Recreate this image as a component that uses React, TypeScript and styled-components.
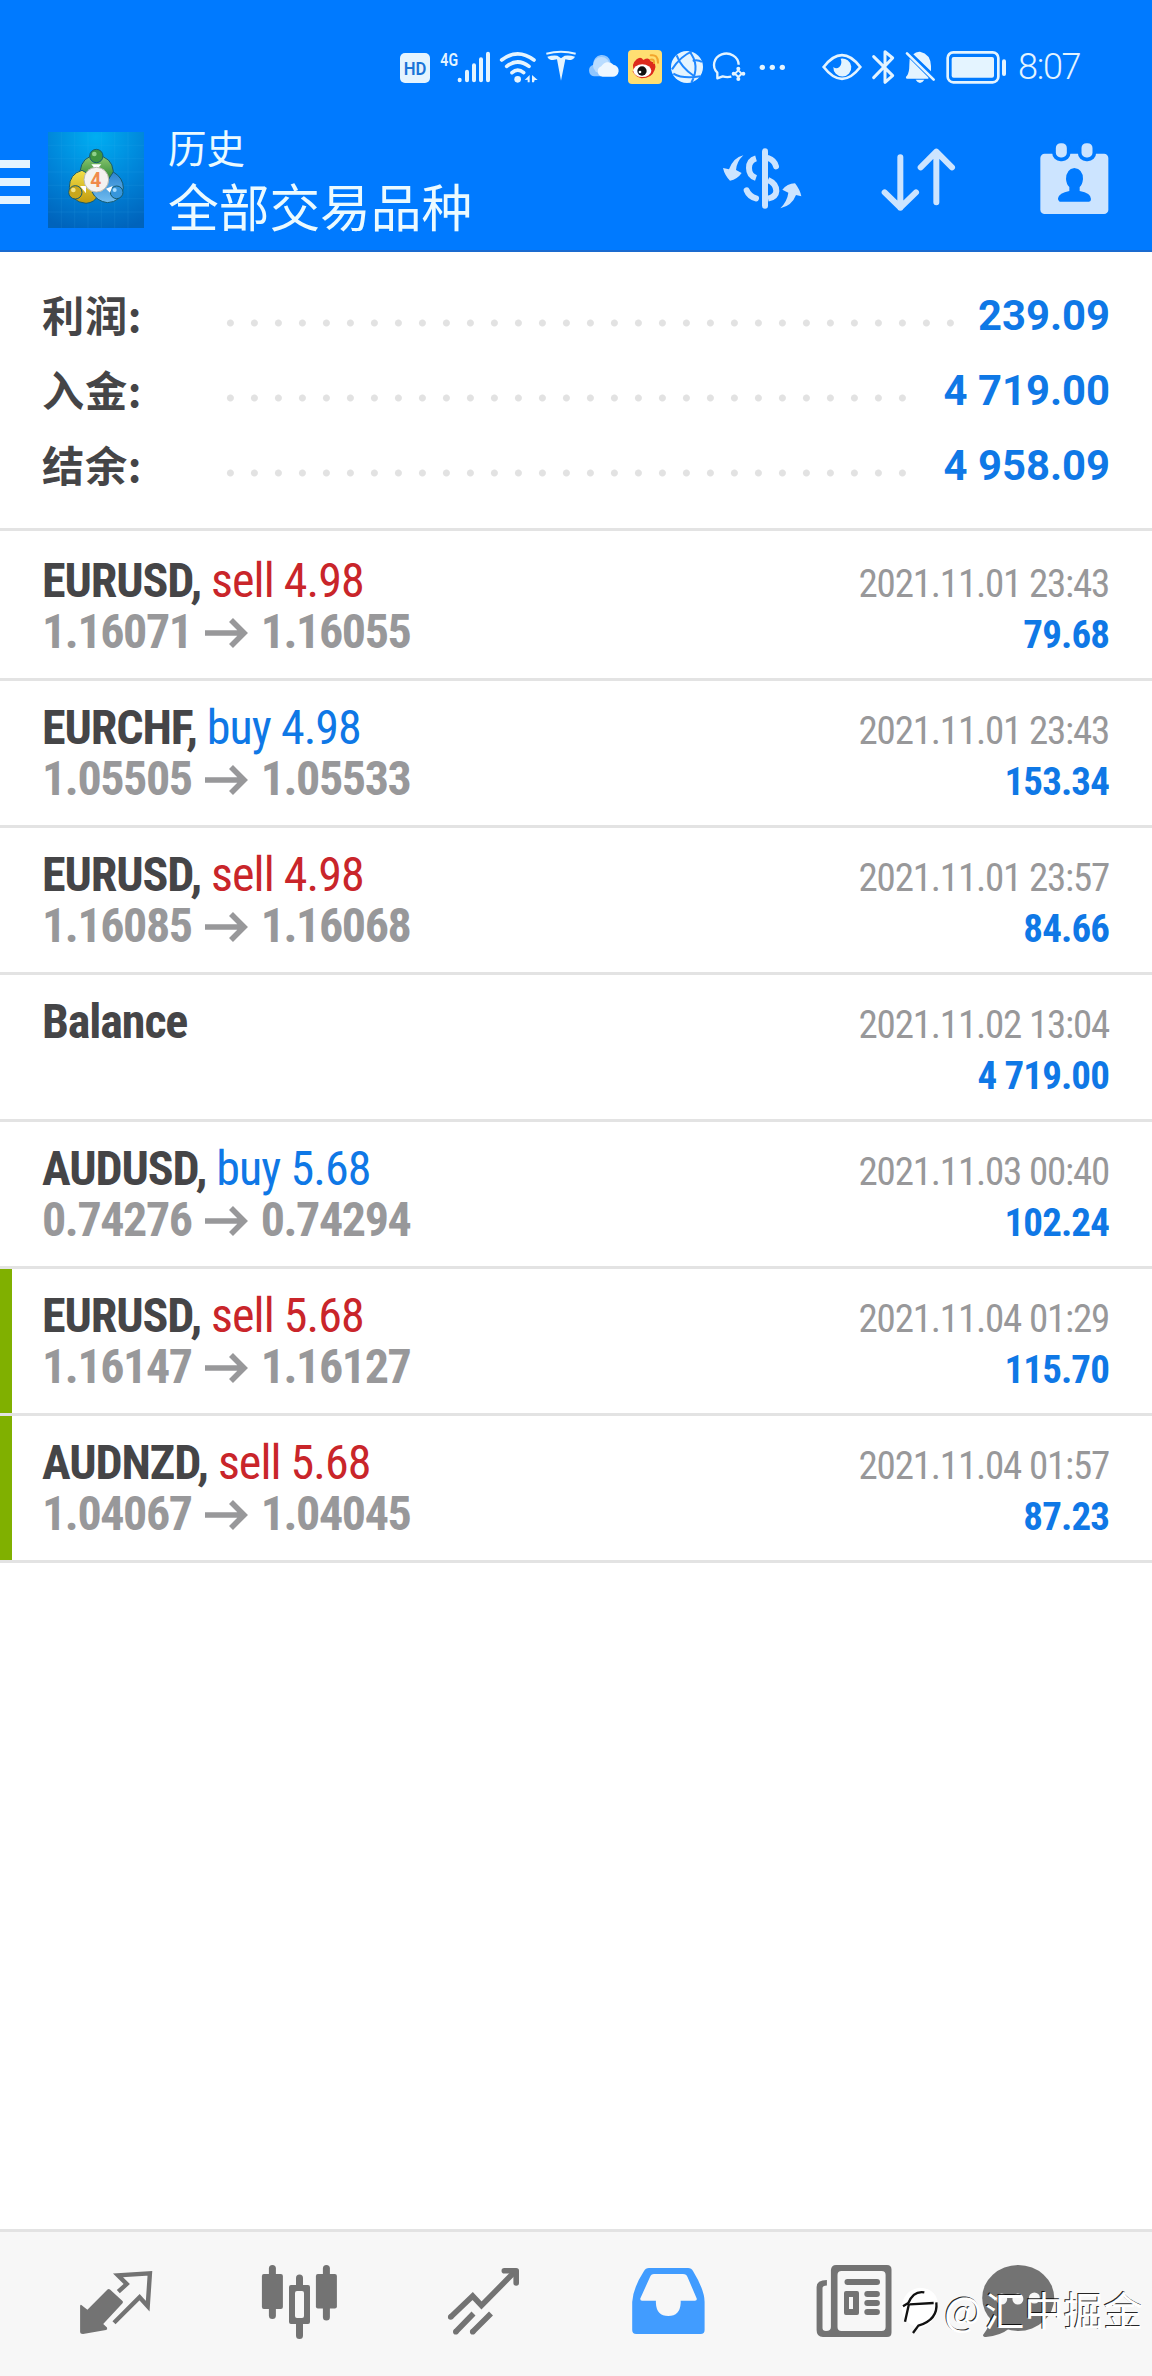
import React from "react";
import styled, { createGlobalStyle } from "styled-components";

const roboto = `"Roboto Condensed", Roboto, "Noto Sans CJK SC", sans-serif`;
const cjk = `"Noto Sans CJK SC", "Noto Sans", sans-serif`;
const ink = "#454547";
const blue = "#0f78e6";
const red = "#c9252a";
const grey = "#98989a";
const pale = "#e4f4ff";
const tool = "#cce4ff";
const navGrey = "#737373";

const GlobalStyle = createGlobalStyle`
  *, *::before, *::after { box-sizing: border-box; }
  body { margin: 0; background: #fff; }
  svg { display: block; flex: none; overflow: visible; }
`;

const Screen = styled.div`
  display: flex;
  flex-direction: column;
  width: 1152px;
  height: 2376px;
  overflow: hidden;
  background: #fff;
`;

const Header = styled.header`
  flex: none;
  height: 252px;
  background: #007aff;
  border-bottom: 2px solid #1a6bd0;
`;

const StatusBar = styled.div`
  display: flex;
  align-items: center;
  height: 90px;
  padding: 45px 0 0 400px;
`;

const StatusGap = styled.div`
  width: 30px;
`;

const Clock = styled.span`
  margin-left: 5px;
  font: 350 36px/45px Roboto, sans-serif;
  letter-spacing: -1.3px;
  color: ${pale};
`;

const Toolbar = styled.div`
  display: flex;
  align-items: center;
  height: 160px;
  padding-top: 20px;
`;

const Burger = styled.div`
  display: grid;
  gap: 10px;
  width: 30px;
  margin: 4px 18px 0 0;
`;

const BurgerBar = styled.div`
  height: 8px;
  background: ${pale};
`;

const Titles = styled.div`
  display: flex;
  flex-direction: column;
  width: 525px;
  margin-left: 24px;
  color: #ebfaff;
  font-family: ${cjk};
`;

const Subtitle = styled.div`
  font-size: 38.5px;
  line-height: 53px;
  margin-bottom: -1px;
`;

const Title = styled.div`
  font-size: 50.7px;
  line-height: 66px;
  margin-bottom: 3px;
`;

const Tools = styled.div`
  display: flex;
  align-items: center;
  margin-bottom: 2px;
`;

const Tool = styled.div<{ $gap?: number }>`
  margin-left: ${(p) => p.$gap ?? 0}px;
`;

const Summary = styled.section`
  flex: none;
  display: flex;
  flex-direction: column;
  height: 279px;
  padding: 27px 42px 0 42px;
  border-bottom: 3px solid #e3e3e3;
`;

const SummaryRow = styled.div`
  display: flex;
  align-items: center;
  height: 75px;
`;

const SummaryLabel = styled.div`
  width: 176px;
  height: 75px;
  font: 700 42.2px/69px ${cjk};
  letter-spacing: 0.7px;
  color: ${ink};
`;

const Leader = styled.div`
  flex: 1;
  height: 8px;
  margin: 12px 24px 0 0;
  background: radial-gradient(circle at 12.4px 4px, #e2e2e2 3px, transparent 4px) 0 0 / 24px 8px repeat-x;
`;

const SummaryValue = styled.div`
  height: 75px;
  font: 700 41.8px/73px Roboto, sans-serif;
  color: ${blue};
`;

const List = styled.section`
  flex: 1;
  padding-top: 3px;
`;

const Deal = styled.article<{ $marked?: boolean }>`
  display: flex;
  flex-direction: column;
  height: 147px;
  padding: 21px 42px 0 42px;
  border-bottom: 3px solid #e3e3e3;
  box-shadow: ${(p) => (p.$marked ? "inset 12px 0 #80b000" : "none")};
  font-family: ${roboto};
  font-stretch: condensed;
`;

const Line = styled.div`
  display: flex;
  align-items: baseline;
  justify-content: space-between;
  height: 51px;
  line-height: 51px;
  white-space: pre;
`;

const Symbol = styled.div`
  font-size: 48px;
  font-weight: 700;
  letter-spacing: -1.1px;
  color: ${ink};
`;

const Side = styled.span<{ $side: "buy" | "sell" }>`
  font-weight: 400;
  letter-spacing: -0.95px;
  color: ${(p) => (p.$side === "buy" ? blue : red)};
`;

const Prices = styled.div`
  display: flex;
  align-items: baseline;
  font-size: 48px;
  font-weight: 700;
  letter-spacing: -1.4px;
  color: ${grey};

  &::before {
    content: "\\200b";
    width: 0;
    letter-spacing: 0;
  }
`;

const ArrowBox = styled.span`
  margin: 0 14px 0 13px;
`;

const Stamp = styled.div`
  padding-right: 1px;
  font-size: 39px;
  letter-spacing: -1.2px;
  color: ${grey};
`;

const Profit = styled.div`
  padding-right: 1px;
  font-size: 39px;
  font-weight: 700;
  letter-spacing: -0.9px;
  color: ${blue};
`;

const Nav = styled.nav`
  position: relative;
  flex: none;
  display: flex;
  justify-content: space-around;
  align-items: center;
  height: 147px;
  padding: 0 24px;
  background: #f7f7f7;
  border-top: 3px solid #e3e3e3;
`;

const NavItem = styled.div`
  flex: 1;
  display: flex;
  justify-content: center;
`;

const Watermark = styled.div`
  position: absolute;
  right: 9px;
  bottom: 37px;
  display: flex;
  align-items: center;
  gap: 3px;
  font: 400 39.6px/60px ${cjk};
  color: #fff;
  text-shadow: -1px -1px 0.5px rgba(0, 0, 0, 0.85);
`;

const LogoText = styled.text`
  font: 700 58px Roboto, sans-serif;
  fill: #f08a4a;
`;

const BadgeText = styled.text`
  font: 600 57px Roboto, sans-serif;
`;

function StatusIcons() {
  return (
    <>
      <svg width="35" height="45" viewBox="60 45 105 135">
        <rect x="60" y="69" width="90" height="90" rx="15" fill={pale} />
        <BadgeText x="71" y="135" fill="#1a74d8" textLength="68" lengthAdjust="spacingAndGlyphs">HD</BadgeText>
      </svg>
      <svg width="60" height="45" viewBox="165 45 180 135">
        <BadgeText x="181" y="107" fill={pale} textLength="53" lengthAdjust="spacingAndGlyphs">4G</BadgeText>
        <g stroke={pale} strokeWidth="12" strokeLinecap="round">
          <path d="M239 149v2M261 125v26M282 106v45M303 88v63M324 71v80" />
        </g>
      </svg>
      <svg width="45" height="45" viewBox="345 45 135 135">
        <g fill="none" stroke={pale} strokeWidth="11" strokeLinecap="round">
          <path d="M365 90Q413 53 462 90M380 109Q413 83 447 109M396 128Q413 113 431 128" />
        </g>
        <circle cx="413" cy="148" r="10" fill={pale} />
        <path d="M434 150l15-15v22h-6v-8zM456 157v-22l17 15-9 0-2 7z" fill={pale} />
      </svg>
      <svg width="40" height="45" viewBox="480 45 120 135">
        <path d="M499 71Q543 60 587 71" fill="none" stroke={pale} strokeWidth="6" />
        <path d="M502 80Q518 75 532 77L543 85 554 77Q570 75 585 80Q580 90 567 90L556 88 543 152 531 88 519 90Q506 90 502 80z" fill={pale} />
      </svg>
      <svg width="40" height="45" viewBox="600 45 120 135">
        <path d="M642 139a18 18 0 0 1-2-35a26 26 0 0 1 52-6l-10 30-20 11z" fill="#8fc6ff" />
        <circle cx="664" cy="106" r="25" fill="#b9dcff" />
        <path d="M668 140a16 16 0 0 1-4-31 22 22 0 0 1 36-5 18 18 0 0 1-4 36z" fill="#eef7ff" />
      </svg>
      <svg width="47" height="45" viewBox="720 45 141 135">
        <rect x="744" y="60" width="102" height="102" rx="12" fill="#ffdf72" />
        <path d="M765 125Q750 105 770 88Q782 78 790 90Q808 80 812 94Q832 98 824 120Q815 145 785 145Q765 140 757 122z" fill="#dd2a1c" />
        <ellipse cx="787" cy="122" rx="27" ry="19" fill="#fff" />
        <circle cx="786" cy="123" r="14" fill="#111" />
        <circle cx="780" cy="126" r="4" fill="#fff" />
        <path d="M812 76Q834 72 834 98M812 89Q823 86 822 99" fill="none" stroke="#f3a52c" strokeWidth="6" strokeLinecap="round" />
      </svg>
      <svg width="40" height="45" viewBox="861 45 120 135">
        <circle cx="921" cy="111" r="48" fill={pale} />
        <g fill="none" stroke="#1f87ff" strokeWidth="6">
          <path d="M936 64Q902 78 876 118M890 76Q903 112 942 138M880 131Q908 148 962 139M928 64Q962 105 934 158M938 92Q954 88 966 96" />
        </g>
      </svg>
      <svg width="43" height="45" viewBox="981 45 129 135">
        <path d="M1076 104A37 34 0 1 0 1012 128L1012 145 1028 139Q1040 143 1054 140" fill="none" stroke={pale} strokeWidth="7" strokeLinejoin="round" />
        <path d="M1075 121L1085 131 1075 141 1065 131z" fill="none" stroke={pale} strokeWidth="6" />
        <g fill={pale}><circle cx="1075" cy="116" r="6" /><circle cx="1090" cy="131" r="6" /><circle cx="1075" cy="147" r="6" /><circle cx="1061" cy="131" r="6" /></g>
      </svg>
      <svg width="40" height="45" viewBox="1110 45 120 135">
        <g fill={pale}><circle cx="1147" cy="112" r="8" /><circle cx="1177" cy="112" r="8" /><circle cx="1207" cy="112" r="8" /></g>
      </svg>
      <StatusGap />
      <svg width="45" height="45" viewBox="120 45 135 135">
        <path d="M131 111Q186 40 241 111Q186 182 131 111z" fill="none" stroke={pale} strokeWidth="8" />
        <path d="M182 86a27 27 0 1 1-22 25q9 8 18 0q10-10 4-25z" fill={pale} />
      </svg>
      <svg width="35" height="45" viewBox="255 45 105 135">
        <path d="M281 80L338 137 315 157V65L338 84 281 143" fill="none" stroke={pale} strokeWidth="9" strokeLinecap="round" strokeLinejoin="round" />
      </svg>
      <svg width="40" height="45" viewBox="360 45 120 135">
        <path d="M400 73Q408 64 420 65Q452 72 453 108V124zM389 86L443 140Q450 146 440 146H380Q375 142 381 137Q388 128 388 105zM407 149h26q-13 20-26 0z" fill={pale} />
        <path d="M381 70L461 149" stroke={pale} strokeWidth="8" strokeLinecap="round" />
      </svg>
      <svg width="73" height="45" viewBox="480 45 219 135">
        <rect x="503" y="67" width="152" height="90" rx="17" fill="none" stroke={pale} strokeWidth="8" />
        <rect x="515" y="81" width="127" height="62" rx="6" fill={pale} />
        <rect x="666" y="88" width="12" height="50" rx="6" fill={pale} />
      </svg>
    </>
  );
}

function AppLogo() {
  return (
    <svg width="96" height="96" viewBox="144 66 288 288">
      <defs>
        <radialGradient id="sky" cx="0.5" cy="0.05" r="1">
          <stop offset="0" stopColor="#00aef2" />
          <stop offset="0.55" stopColor="#0083d8" />
          <stop offset="1" stopColor="#0063bb" />
        </radialGradient>
        <linearGradient id="green" x2="0" y2="1"><stop offset="0" stopColor="#8fca72" /><stop offset="1" stopColor="#26812f" /></linearGradient>
        <linearGradient id="gold" x2="0" y2="1"><stop offset="0" stopColor="#f2e04a" /><stop offset="1" stopColor="#c29a0c" /></linearGradient>
        <linearGradient id="azure" x2="0" y2="1"><stop offset="0" stopColor="#2b83cf" /><stop offset="1" stopColor="#72bdf0" /></linearGradient>
      </defs>
      <rect x="144" y="66" width="288" height="288" fill="url(#sky)" />
      <path d="M184 66v288M224 66v288M264 66v288M304 66v288M344 66v288M384 66v288M144 106h288M144 146h288M144 186h288M144 226h288M144 266h288M144 306h288" stroke="#4dc0f5" strokeOpacity="0.16" strokeWidth="2" />
      <g stroke="#155a70" strokeWidth="3">
        <path d="M240 184Q246 138 289 136Q336 140 340 184Q338 206 320 214L250 190z" fill="url(#green)" />
        <path d="M246 181Q208 192 208 232Q212 276 258 280Q284 278 294 256L262 190z" fill="url(#gold)" />
        <path d="M340 186Q370 204 370 234Q364 276 322 278Q290 274 276 246L320 216z" fill="url(#azure)" />
        <circle cx="289" cy="138" r="20" fill="#3f9440" />
        <circle cx="226" cy="247" r="20" fill="#c9a71d" />
        <circle cx="350" cy="247" r="19" fill="#3796dc" />
      </g>
      <path d="M274 163h30l-15 18zM240 228h18v22zM318 236l20-8-8 20z" fill="#fff" />
      <circle cx="283" cy="132" r="7" fill="#8fd08a" />
      <circle cx="220" cy="240" r="7" fill="#f4e488" />
      <circle cx="344" cy="240" r="6" fill="#a8dcff" />
      <circle cx="289" cy="209" r="37" fill="#f4f2f0" stroke="#b9b9b0" strokeWidth="3" />
      <LogoText x="271" y="230">4</LogoText>
    </svg>
  );
}

function DollarIcon() {
  return (
    <svg width="80" height="65" viewBox="96 80 240 195">
      <g fill={tool}>
        <path d="M160 105Q140 124 138 149L155 158Q142 177 120 181Q104 165 99 143L117 147Q130 112 160 105z" />
        <path d="M271 264Q292 242 295 217L277 208Q291 190 315 189Q330 208 334 228L318 224Q306 256 271 264z" />
      </g>
      <path d="M225 93V256" stroke={tool} strokeWidth="18" strokeLinecap="round" />
      <g fill="none" stroke={tool} strokeWidth="18">
        <path d="M198 114Q177 120 177 143Q177 166 198 173" />
        <path d="M234 113Q254 120 258 138" strokeLinecap="round" />
        <path d="M234 179Q259 190 259 212Q258 230 234 235" />
        <path d="M198 234Q177 228 170 210" strokeLinecap="round" />
      </g>
    </svg>
  );
}

function SortIcon() {
  return (
    <svg width="75" height="65" viewBox="572 80 225 195">
      <g fill="none" stroke={tool} strokeWidth="18" strokeLinecap="round" strokeLinejoin="round">
        <path d="M630 111V262M583 216L630 262 677 216M738 246V94M691 141L738 94 785 141" />
      </g>
    </svg>
  );
}

function CalendarIcon() {
  return (
    <svg width="69" height="72" viewBox="1049 70 207 216">
      <rect x="1050" y="102" width="204" height="181" rx="13" fill={tool} />
      <g fill={tool} stroke="#007aff" strokeWidth="11">
        <rect x="1091" y="65" width="44" height="54" rx="20" />
        <rect x="1168" y="65" width="44" height="54" rx="20" />
      </g>
      <path d="M1152 145Q1178 148 1178 178Q1176 196 1168 202V214Q1202 220 1202 238Q1202 246 1196 246H1108Q1102 244 1103 236Q1106 220 1137 214V202Q1128 194 1127 178Q1128 148 1152 145z" fill="#007aff" />
    </svg>
  );
}

function Arrow() {
  return (
    <ArrowBox>
      <svg width="42" height="30" viewBox="0 0 42 30">
        <path d="M0 15H38M26 2L39 15 26 28" fill="none" stroke={grey} strokeWidth="5.6" />
      </svg>
    </ArrowBox>
  );
}

const navIcons = [
  <g fill={navGrey} stroke="none">
    <path d="M12.1 50Q12.5 48 14 49.5L19.4 53.7 39.5 33.5Q40.7 32.3 42 33.5L54.5 45Q55.5 46 54.5 47.2L35.2 68 39 71.4Q39.8 73.5 38 74L15 78Q12 78 12.1 75.5z" />
    <path d="M50.3 35.7L58.7 28 50 19.3 81.9 17.3 79.7 50.2 71.6 41.3 46 66.7" fill="none" stroke={navGrey} strokeWidth="4.4" />
  </g>,
  <g fill={navGrey}>
    <rect x="9.9" y="18" width="21" height="35" rx="2" />
    <rect x="16.9" y="9" width="7" height="54" rx="3.5" />
    <path fillRule="evenodd" d="M39 29H56Q58 29 58 31V66Q58 68 56 68H39Q37 68 37 66V31Q37 29 39 29zM45 35Q43 35 43 37V60Q43 62 45 62H50Q52 62 52 60V37Q52 35 50 35z" />
    <path d="M44 30V22a3.5 3.5 0 0 1 7 0v8zM44 67V79.5a3.5 3.5 0 0 0 7 0V67z" />
    <rect x="63.9" y="18" width="21" height="34.5" rx="2" />
    <rect x="70.9" y="9" width="7" height="55.5" rx="3.5" />
  </g>,
  <g fill="none" stroke={navGrey} strokeWidth="5.6">
    <path d="M14.7 61L36.7 40 45.5 49.5 79 15.5" />
    <path d="M68.3 14.8H80.2V27" strokeLinejoin="round" strokeLinecap="round" />
    <path d="M19.8 75.7L37.5 57.5M36.7 75.7L55 57.5" />
    <path d="M14.7 61h.01M19.8 75.7h.01M36.7 75.7h.01" strokeLinecap="round" />
  </g>,
  <path
    fill="#419cff"
    fillRule="evenodd"
    d="M29 12H68Q71.5 12 73 15Q84.6 34 84.6 46V74Q84.6 78 80.6 78H16.2Q12.2 78 12.2 74V46Q13 32 24 15Q25.5 12 29 12zM34 18Q31 18 30 21L20.3 42.5Q20 44.7 22 44.7H35.9V47Q36.5 60 48.3 60Q60 60 60.7 47V44.7H75Q77.2 44.7 76.7 42.5L67.5 21Q66.5 18 63 18z"
  />,
  <g fill={navGrey}>
    <path fillRule="evenodd" d="M32 9H83Q87.5 9 87.5 13.5V76.5Q87.5 81 83 81H19Q12.6 81 12.6 74V31Q12.6 24 22.9 24V29.5Q18.5 29.5 18.5 32V72Q18.5 75 22 75Q26.9 75 26.9 71V14Q27.5 9 32 9zM37.5 15Q33.5 15 33.5 19V71Q33.5 75 37.5 75H77.6Q81.6 75 81.6 71V19Q81.6 15 77.6 15z" />
    <rect x="40.5" y="23" width="35.5" height="6" rx="3" />
    <path fillRule="evenodd" d="M42 35H53Q55 35 55 37V57Q55 59 53 59H42Q40 59 40 57V37Q40 35 42 35zM45 41V53H49V41z" />
    <rect x="60.3" y="35" width="15.6" height="6" rx="3" />
    <rect x="60.3" y="44" width="15.6" height="6" rx="3" />
    <rect x="60.3" y="53" width="15.6" height="6" rx="3" />
  </g>,
  <g fill={navGrey}>
    <ellipse cx="30.2" cy="42" rx="36" ry="33" />
    <path d="M2 59Q3 69-5 79Q-5 81-2 81Q12 80 22 72z" />
    <g fill="#f7f7f7"><circle cx="13.7" cy="43" r="5.5" /><circle cx="29.9" cy="43" r="5.5" /><circle cx="46.4" cy="42" r="5.5" /></g>
  </g>,
];

const summary = [
  ["利润:", "239.09"],
  ["入金:", "4 719.00"],
  ["结余:", "4 958.09"],
];

type DealData = {
  symbol: string;
  side?: "buy" | "sell";
  lot?: string;
  from?: string;
  to?: string;
  time: string;
  profit: string;
  marked?: boolean;
};

const deals: DealData[] = [
  { symbol: "EURUSD", side: "sell", lot: "4.98", from: "1.16071", to: "1.16055", time: "2021.11.01 23:43", profit: "79.68" },
  { symbol: "EURCHF", side: "buy", lot: "4.98", from: "1.05505", to: "1.05533", time: "2021.11.01 23:43", profit: "153.34" },
  { symbol: "EURUSD", side: "sell", lot: "4.98", from: "1.16085", to: "1.16068", time: "2021.11.01 23:57", profit: "84.66" },
  { symbol: "Balance", time: "2021.11.02 13:04", profit: "4 719.00" },
  { symbol: "AUDUSD", side: "buy", lot: "5.68", from: "0.74276", to: "0.74294", time: "2021.11.03 00:40", profit: "102.24" },
  { symbol: "EURUSD", side: "sell", lot: "5.68", from: "1.16147", to: "1.16127", time: "2021.11.04 01:29", profit: "115.70", marked: true },
  { symbol: "AUDNZD", side: "sell", lot: "5.68", from: "1.04067", to: "1.04045", time: "2021.11.04 01:57", profit: "87.23", marked: true },
];

export default function App() {
  return (
    <Screen>
      <GlobalStyle />
      <Header>
        <StatusBar>
          <StatusIcons />
          <Clock>8:07</Clock>
        </StatusBar>
        <Toolbar>
          <Burger><BurgerBar /><BurgerBar /><BurgerBar /></Burger>
          <AppLogo />
          <Titles>
            <Subtitle>历史</Subtitle>
            <Title>全部交易品种</Title>
          </Titles>
          <Tools>
            <Tool $gap={29}><DollarIcon /></Tool>
            <Tool $gap={78.7}><SortIcon /></Tool>
            <Tool $gap={84}><CalendarIcon /></Tool>
          </Tools>
        </Toolbar>
      </Header>
      <Summary>
        {summary.map(([label, value]) => (
          <SummaryRow key={label}>
            <SummaryLabel>{label}</SummaryLabel>
            <Leader />
            <SummaryValue>{value}</SummaryValue>
          </SummaryRow>
        ))}
      </Summary>
      <List>
        {deals.map((d) => (
          <Deal key={d.time + d.symbol} $marked={d.marked}>
            <Line>
              <Symbol>
                {d.symbol}
                {d.side && <>, <Side $side={d.side}>{d.side} {d.lot}</Side></>}
              </Symbol>
              <Stamp>{d.time}</Stamp>
            </Line>
            <Line>
              <Prices>{d.from && <>{d.from}<Arrow />{d.to}</>}</Prices>
              <Profit>{d.profit}</Profit>
            </Line>
          </Deal>
        ))}
      </List>
      <Nav>
        {navIcons.map((icon, i) => (
          <NavItem key={i}>
            <svg width="96" height="96" viewBox="0 0 96 96">{icon}</svg>
          </NavItem>
        ))}
        <Watermark>
          <svg width="40" height="44" viewBox="0 0 120 132">
            <path d="M56 2Q112 4 112 62Q108 108 44 130L40 118Q0 100 2 56Q10 8 56 2z" fill="#fff" />
            <path d="M6 58L22 48Q38 10 70 16M24 50L12 104M26 52L98 48M106 46Q112 98 52 116L36 138" fill="none" stroke="#111" strokeWidth="7" />
          </svg>
          <span>@</span>
          <span>汇中掘金</span>
        </Watermark>
      </Nav>
    </Screen>
  );
}
